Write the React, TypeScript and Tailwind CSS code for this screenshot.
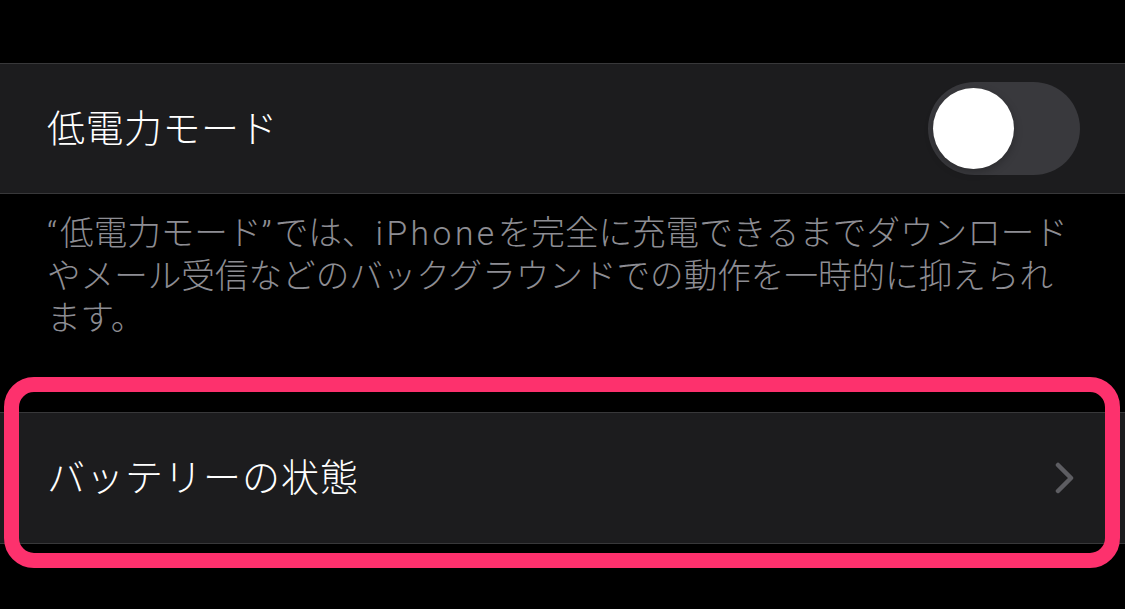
import React, { useState } from "react";

const jp = "font-['Roboto','Noto_Sans_CJK_JP',sans-serif]";

function Toggle({ on, onChange }: { on: boolean; onChange: () => void }) {
  return (
    <button
      onClick={onChange}
      className={`relative h-[93px] w-[152px] rounded-full transition-colors ${
        on ? "bg-[#30d158]" : "bg-[#39393d]"
      }`}
    >
      <span
        className={`absolute top-[6px] h-[81px] w-[81px] rounded-full bg-white shadow-[0_3px_8px_rgba(0,0,0,0.25)] transition-all ${
          on ? "left-[65px]" : "left-[5px]"
        }`}
      />
    </button>
  );
}

export default function App() {
  const [lowPower, setLowPower] = useState(false);

  return (
    <div className={`h-[609px] w-[1125px] overflow-hidden bg-black font-light ${jp}`}>
      <div className="h-[63px]" />

      {/* 低電力モード */}
      <div className="flex h-[131px] items-center justify-between border-y border-[#38383a] bg-[#1c1c1e] pl-[47px] pr-[45px]">
        <span className="text-[38px] leading-none tracking-[0.5px] text-white">
          低電力モード
        </span>
        <Toggle on={lowPower} onChange={() => setLowPower(!lowPower)} />
      </div>

      <p className="pl-[47px] pr-[40px] pt-[19px] text-[33.6px] leading-[42.5px] text-[#8d8d93]">
        <span className="tracking-[3px]">“</span>低電力モード
        <span className="tracking-[3px]">”</span>では、
        <span className="tracking-[3.5px]">iPhone</span>を完全に充電できるまでダウンロード
        <br />
        やメール受信などのバックグラウンドでの動作を一時的に抑えられ
        <br />
        ます。
      </p>

      <div className="relative mt-[71px]">
        {/* バッテリーの状態 */}
        <div className="flex h-[132px] items-center justify-between border-y border-[#38383a] bg-[#1c1c1e] pl-[47px] pr-[50px]">
          <span className="text-[38px] leading-none tracking-[1px] text-white">
            バッテリーの状態
          </span>
          <svg width="20" height="32" viewBox="0 0 20 32" fill="none">
            <polyline
              points="3,3 16,16 3,29"
              stroke="#5d5d62"
              strokeWidth="4.5"
              strokeLinecap="round"
              strokeLinejoin="round"
            />
          </svg>
        </div>

        {/* annotation highlight */}
        <div className="pointer-events-none absolute left-[4px] top-[-35px] h-[191px] w-[1116px] rounded-[30px] border-[15px] border-[#fd316d]" />
      </div>
    </div>
  );
}
